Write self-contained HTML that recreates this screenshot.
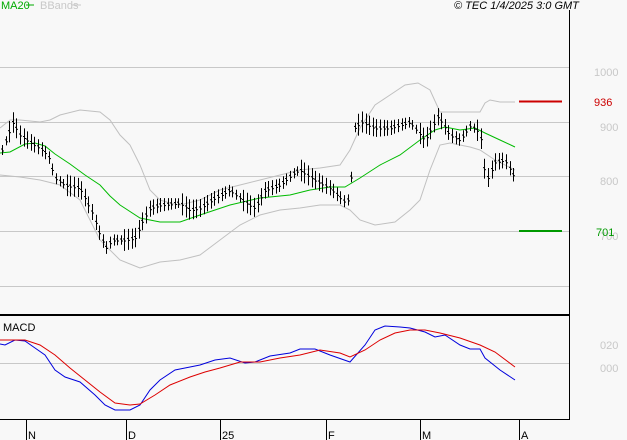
<!DOCTYPE html>
<html><head><meta charset="utf-8"><style>
html,body{margin:0;padding:0;background:#f8f8f8}
svg{display:block}
text{font-family:"Liberation Sans",sans-serif;font-size:11px}
</style></head><body>
<svg id="s" width="627" height="440" xmlns="http://www.w3.org/2000/svg">
<rect width="627" height="440" fill="#f8f8f8"/>
<g stroke="#c8c8c8" stroke-width="1">
<line x1="0" y1="67.5" x2="569" y2="67.5"/>
<line x1="0" y1="122.5" x2="569" y2="122.5"/>
<line x1="0" y1="176.5" x2="569" y2="176.5"/>
<line x1="0" y1="231.5" x2="569" y2="231.5"/>
<line x1="0" y1="286.5" x2="569" y2="286.5"/>
<line x1="0" y1="363.5" x2="569" y2="363.5"/>
</g>
<line x1="569.5" y1="10" x2="569.5" y2="420" stroke="#000"/>
<line x1="0" y1="315" x2="570" y2="315" stroke="#000" stroke-width="2"/>
<line x1="0" y1="419.5" x2="570" y2="419.5" stroke="#000"/>
<g stroke="#000"><line x1="26.5" y1="420" x2="26.5" y2="440"/><line x1="126.5" y1="420" x2="126.5" y2="440"/><line x1="220.5" y1="420" x2="220.5" y2="440"/><line x1="326.5" y1="420" x2="326.5" y2="440"/><line x1="420.5" y1="420" x2="420.5" y2="440"/><line x1="519.5" y1="420" x2="519.5" y2="440"/></g>
<g font-size="12"><text x="28" y="439">N</text><text x="128" y="439">D</text><text x="222" y="439">25</text><text x="328" y="439">F</text><text x="422" y="439">M</text><text x="521" y="439">A</text></g>
<g fill="#c8c8c8"><text x="594" y="76">1000</text><text x="600" y="131">900</text><text x="600" y="185">800</text><text x="600" y="240">700</text><text x="600" y="349">020</text><text x="600" y="372">000</text></g>
<line x1="519" y1="101.5" x2="562" y2="101.5" stroke="#cc0000" stroke-width="2"/>
<text x="594" y="106" fill="#cc0000">936</text>
<line x1="519" y1="231" x2="562" y2="231" stroke="#009900" stroke-width="2"/>
<text x="596" y="236" fill="#009900">701</text>
<text x="1" y="9" fill="#00aa00" font-size="9">MA20</text><line x1="26" y1="5" x2="34" y2="5" stroke="#00aa00"/>
<text x="40" y="9" fill="#c8c8c8" font-size="9">BBands</text><line x1="72" y1="5" x2="81" y2="5" stroke="#c8c8c8"/>
<text x="454" y="9" font-size="10" font-style="italic">© TEC 1/4/2025 3:0 GMT</text>
<text x="3" y="331" font-size="9">MACD</text>
<g fill="none" stroke-width="1">
<polyline stroke="#c0c0c0" points="0,128 10,120 20,120 40,122 50,120 60,115 80,110 100,112 110,120 120,135 130,145 140,165 150,190 160,200 170,203 180,205 200,200 220,190 240,185 260,180 280,175 300,170 320,168 340,165 350,150 360,128 375,105 390,95 405,85 418,83 430,90 440,112 480,112 485,103 490,100 500,102 515,102"/>
<polyline stroke="#c0c0c0" points="0,175 20,177 40,180 60,185 80,200 100,240 120,260 140,268 160,262 180,260 200,255 220,240 240,225 260,215 280,210 300,208 320,205 340,205 350,210 360,220 375,225 395,222 410,210 420,200 430,170 440,145 450,143 460,145 470,147 480,150 495,160 515,170"/>
<polyline stroke="#00bb00" points="0,153 10,152 25,144 35,143 45,146 55,154 70,164 85,175 100,185 110,196 120,205 140,218 160,222 180,222 200,215 230,205 260,198 290,195 310,190 330,187 345,187 360,178 380,165 400,155 420,140 435,130 445,127 460,130 475,128 485,133 500,140 515,147"/>
<polyline stroke="#0000dd" points="0,344 5,345 15,340 25,341 35,348 45,355 55,370 65,377 80,382 95,395 105,405 115,410 130,410 140,405 150,390 160,380 175,370 185,368 200,365 215,360 230,358 245,363 255,362 270,356 290,353 300,349 315,349 330,355 350,362 365,345 375,330 385,326 400,327 410,328 425,332 435,337 445,335 460,345 470,349 480,349 485,358 500,370 515,380"/>
<polyline stroke="#dd0000" points="0,340 25,340 40,345 55,355 70,368 85,380 100,392 115,403 130,405 140,404 155,395 170,385 190,377 205,372 220,368 240,362 260,362 280,358 300,355 320,350 340,353 350,357 365,350 380,340 395,333 410,330 425,330 440,333 460,338 480,345 495,352 515,367"/>
</g>
<g id="bars" stroke="#000" stroke-width="1"></g>
</svg>
<script>
var P=[[2,150],[13,122],[20,135],[30,142],[40,148],[48,155],[55,178],[65,185],[80,188],[92,212],[100,235],[106,248],[112,240],[125,240],[135,238],[142,222],[150,208],[160,205],[180,203],[190,210],[200,208],[215,198],[230,190],[245,202],[255,208],[265,190],[280,185],[295,172],[300,170],[315,180],[330,188],[345,202],[350,198],[354,128],[362,122],[375,128],[390,128],[410,122],[425,140],[438,116],[450,135],[460,140],[470,126],[480,132],[486,182],[495,162],[505,160],[515,178]];
function f(x){for(var i=1;i<P.length;i++){if(x<=P[i][0]){var a=P[i-1],b=P[i];return a[1]+(b[1]-a[1])*(x-a[0])/(b[0]-a[0]);}}return P[P.length-1][1];}
var g=document.getElementById('bars'),h='';
for(var x=2;x<=516;x+=3.6){var xx=Math.round(x)+.5,c=f(x),r=9+((x*7)%13);
h+='<line x1="'+xx+'" y1="'+(c-r/2)+'" x2="'+xx+'" y2="'+(c+r/2)+'"/><line x1="'+(xx-1.5)+'" y1="'+(c-1)+'" x2="'+xx+'" y2="'+(c-1)+'"/><line x1="'+xx+'" y1="'+(c+1)+'" x2="'+(xx+1.5)+'" y2="'+(c+1)+'"/>';}
g.innerHTML=h;
</script>
</body></html>
